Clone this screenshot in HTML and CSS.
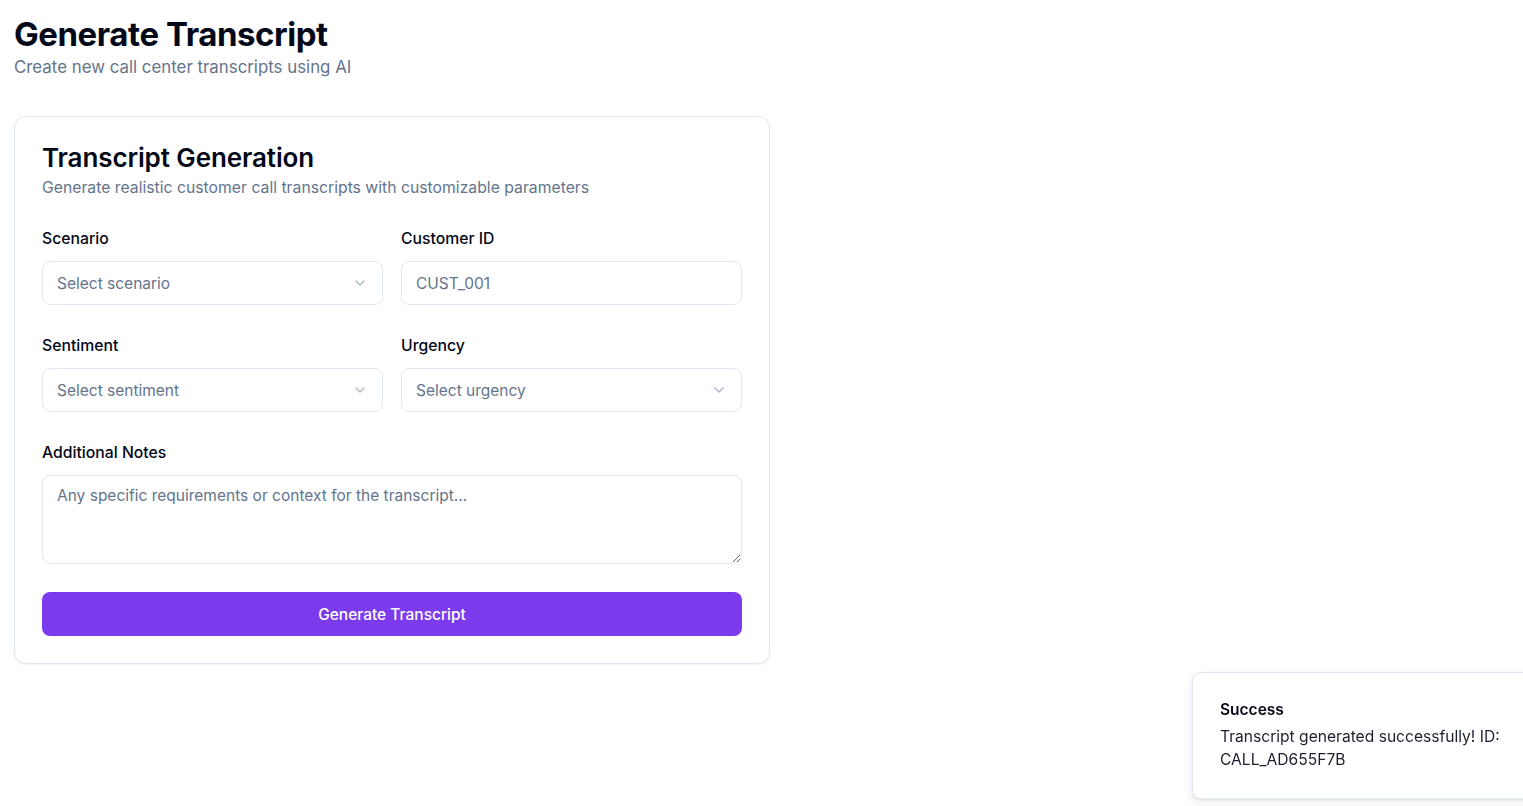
FILE: index.html
```html
<!DOCTYPE html>
<html lang="en">
<head>
<meta charset="utf-8">
<title>Generate Transcript</title>
<link rel="stylesheet" href="styles.css">
</head>
<body>
<main class="page">
  <header class="page-header">
    <h1 class="page-title">Generate Transcript</h1>
    <p class="page-subtitle">Create new call center transcripts using AI</p>
  </header>

  <section class="card">
    <h2 class="card-title">Transcript Generation</h2>
    <p class="card-subtitle">Generate realistic customer call transcripts with customizable parameters</p>

    <div class="form">
      <div class="row">
        <div class="field">
          <label class="label">Scenario</label>
          <button class="select" type="button">
            <span class="select-value">Select scenario</span>
            <svg class="chevron" viewBox="0 0 24 24" width="16" height="16" fill="none" stroke="currentColor" stroke-width="2" stroke-linecap="round" stroke-linejoin="round"><path d="m6 9 6 6 6-6"/></svg>
          </button>
        </div>
        <div class="field">
          <label class="label">Customer ID</label>
          <input class="input" type="text" placeholder="CUST_001">
        </div>
      </div>

      <div class="row row-second">
        <div class="field">
          <label class="label">Sentiment</label>
          <button class="select" type="button">
            <span class="select-value">Select sentiment</span>
            <svg class="chevron" viewBox="0 0 24 24" width="16" height="16" fill="none" stroke="currentColor" stroke-width="2" stroke-linecap="round" stroke-linejoin="round"><path d="m6 9 6 6 6-6"/></svg>
          </button>
        </div>
        <div class="field">
          <label class="label">Urgency</label>
          <button class="select" type="button">
            <span class="select-value">Select urgency</span>
            <svg class="chevron" viewBox="0 0 24 24" width="16" height="16" fill="none" stroke="currentColor" stroke-width="2" stroke-linecap="round" stroke-linejoin="round"><path d="m6 9 6 6 6-6"/></svg>
          </button>
        </div>
      </div>

      <div class="field field-notes">
        <label class="label">Additional Notes</label>
        <textarea class="textarea" placeholder="Any specific requirements or context for the transcript..."></textarea>
      </div>

      <button class="primary" type="button">Generate Transcript</button>
    </div>
  </section>
</main>

<div class="toast" role="status">
  <div class="toast-title">Success</div>
  <div class="toast-body">Transcript generated successfully! ID: CALL_AD655F7B</div>
</div>
</body>
</html>
```

FILE: styles.css
```css
* { box-sizing: border-box; }

html, body {
  margin: 0;
  background: #ffffff;
  font-family: Inter, "Noto Sans", "Liberation Sans", sans-serif;
  color: #020817;
}

.page {
  padding: 14px 14px;
}

.page-header {
  display: flex;
  flex-direction: column;
}

.page-title {
  margin: 0;
  font-size: 33px;
  line-height: 40px;
  font-weight: 700;
  letter-spacing: -0.45px;
  color: #020817;
}

.page-subtitle {
  margin: 1px 0 0;
  font-size: 16.85px;
  line-height: 24px;
  color: #64748b;
}

.card {
  margin-top: 37px;
  width: 756px;
  border: 1px solid #e2e8f0;
  border-radius: 12px;
  background: #fff;
  box-shadow: 0 1px 2px rgba(0, 0, 0, 0.05);
  padding: 25px 27px 27px;
}

.card-title {
  margin: 0;
  font-size: 26px;
  line-height: 32px;
  font-weight: 600;
  letter-spacing: -0.1px;
  color: #020817;
}

.card-subtitle {
  margin: 3px 0 0;
  font-size: 15.75px;
  line-height: 22px;
  color: #64748b;
}

.form {
  margin-top: 29px;
  display: flex;
  flex-direction: column;
  gap: 29px;
}

.row {
  display: grid;
  grid-template-columns: 1fr 1fr;
  gap: 18px;
}

.row-second {
  margin-top: 1px;
}

.field {
  display: flex;
  flex-direction: column;
  gap: 11px;
}

.field-notes {
  margin-top: 1px;
}

.label {
  font-size: 15.75px;
  line-height: 22px;
  font-weight: 500;
  color: #020817;
}

.select,
.input,
.textarea {
  width: 100%;
  border: 1px solid #e2e8f0;
  border-radius: 8px;
  background: #fff;
  font-family: inherit;
  font-size: 15.5px;
  color: #64748b;
  padding: 0 14px;
}

.select {
  height: 44px;
  display: flex;
  align-items: center;
  justify-content: space-between;
  text-align: left;
  cursor: pointer;
}

.select-value {
  color: #64748b;
}

.chevron {
  color: #94a3b8;
  opacity: 0.8;
  width: 16px;
  height: 16px;
}

.input {
  height: 44px;
  outline: none;
}

.input::placeholder,
.textarea::placeholder {
  color: #64748b;
  opacity: 1;
}

.textarea {
  height: 89px;
  padding: 9px 14px;
  line-height: 22px;
  resize: vertical;
  outline: none;
}

.primary {
  margin-top: -1px;
  height: 44px;
  width: 100%;
  border: none;
  border-radius: 8px;
  background: #7c3aed;
  color: #fff;
  font-family: inherit;
  font-size: 15.5px;
  font-weight: 500;
  cursor: pointer;
}

.toast {
  position: fixed;
  left: 1192px;
  top: 672px;
  width: 360px;
  border: 1px solid #e2e8f0;
  border-radius: 8px;
  background: #fff;
  box-shadow: 0 4px 10px rgba(0, 0, 0, 0.08), 0 1px 3px rgba(0, 0, 0, 0.06);
  padding: 26px 27px 27px;
}

.toast-title {
  font-size: 15.5px;
  line-height: 22px;
  font-weight: 600;
  color: #020817;
}

.toast-body {
  margin-top: 4px;
  width: 300px;
  font-size: 15.6px;
  line-height: 23px;
  color: #020817;
  opacity: 0.9;
}
```
